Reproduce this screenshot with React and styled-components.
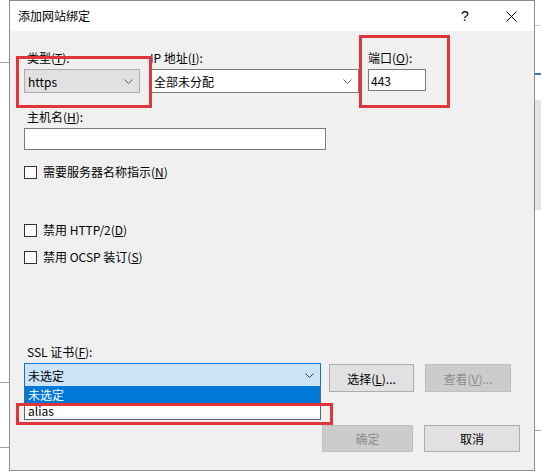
import styled, { createGlobalStyle } from 'styled-components';

const GlobalStyle = createGlobalStyle`
  html, body {
    margin: 0;
    padding: 0;
    background: #ffffff;
  }
  * {
    box-sizing: border-box;
  }
`;

const Screen = styled.div`
  width: 541px;
  height: 473px;
  overflow: hidden;
  padding-left: 9px;
  font-family: "Noto Sans CJK SC", "Noto Sans", sans-serif;
  font-size: 12px;
  color: #000;
  background-color: #ffffff;
  /* bits of the window behind the dialog */
  background-image:
    linear-gradient(#a0a0a0, #a0a0a0),
    linear-gradient(#a0a0a0, #a0a0a0),
    linear-gradient(#a0a0a0, #a0a0a0),
    linear-gradient(#d0d0d0, #d0d0d0),
    linear-gradient(#2f7fa8, #2f7fa8),
    linear-gradient(#e4e4e4, #e4e4e4),
    linear-gradient(#a0a0a0, #a0a0a0);
  background-size: 9px 1px, 9px 1px, 9px 1px, 8px 1px, 8px 2px, 8px 110px, 8px 1px;
  background-position: 0 62px, 0 382px, 0 447px, 533px 25px, 533px 73px, 533px 100px, 533px 430px;
  background-repeat: no-repeat;
`;

const Dialog = styled.div`
  position: relative;
  width: 526px;
  height: 471px;
  border: 1px solid #8c8c8c;
  display: flex;
  flex-direction: column;
  background: #f0f0f0;
`;

const TitleBar = styled.div`
  height: 30px;
  flex: none;
  background: #ffffff;
  display: flex;
  align-items: center;
  padding-left: 8px;
`;

const Title = styled.div`
  flex: 1;
  line-height: 16px;
  margin-top: -1px;
`;

const TitleButton = styled.div`
  width: 46px;
  height: 30px;
  display: flex;
  align-items: center;
  justify-content: center;
  font-size: 14px;
  font-family: "Liberation Sans", sans-serif;
`;

const Body = styled.div`
  flex: 1;
  display: flex;
  flex-direction: column;
  padding: 19px 14px 0 14px;
`;

const Row = styled.div`
  display: flex;
  align-items: flex-start;
  gap: ${p => p.$gap || 0}px;
  margin-top: ${p => p.$top || 0}px;
  margin-left: ${p => p.$left || 0}px;
  justify-content: ${p => (p.$end ? 'flex-end' : 'flex-start')};
`;

const Field = styled.div`
  display: flex;
  flex-direction: column;
  width: ${p => p.$width}px;
  margin-left: ${p => p.$left || 0}px;
  margin-top: ${p => p.$top || 0}px;
`;

const Label = styled.div`
  height: 16px;
  line-height: 16px;
  margin-bottom: 3px;
  padding-left: ${p => p.$indent || 0}px;
  white-space: nowrap;
`;

const Combo = styled.div`
  height: 24px;
  display: flex;
  align-items: center;
  justify-content: space-between;
  padding: 0 6px 0 3px;
  background: ${p => p.$bg || '#ffffff'};
  border: 1px solid ${p => p.$border || '#7a7a7a'};
  white-space: nowrap;
`;

const TextBox = styled.div`
  height: 22px;
  display: flex;
  align-items: center;
  padding: 0 2px;
  background: #ffffff;
  border: 1px solid #7a7a7a;
`;

const CheckRow = styled.div`
  display: flex;
  align-items: center;
  gap: 6px;
  height: 16px;
  margin-top: ${p => p.$top}px;
`;

const Box = styled.span`
  width: 13px;
  height: 13px;
  border: 1px solid #333333;
  background: #ffffff;
  flex: none;
`;

const CheckText = styled.span`
  white-space: nowrap;
  line-height: 16px;
`;

const Button = styled.div`
  width: ${p => p.$width}px;
  height: ${p => p.$height || 27}px;
  margin-top: ${p => p.$top || 0}px;
  display: flex;
  align-items: center;
  justify-content: center;
  background: ${p => (p.$disabled ? '#cccccc' : '#e1e1e1')};
  border: 1px solid ${p => (p.$disabled ? '#bfbfbf' : '#adadad')};
  color: ${p => (p.$disabled ? '#8c8c8c' : '#000000')};
  white-space: nowrap;
  flex: none;
`;

const DropList = styled.div`
  position: absolute;
  left: 14px;
  top: 386px;
  width: 297px;
  border: 1px solid #646464;
  border-top: none;
  background: #ffffff;
`;

const Option = styled.div`
  height: 16px;
  line-height: 16px;
  padding-left: 3px;
  background: ${p => (p.$active ? '#0078d7' : '#ffffff')};
  color: ${p => (p.$active ? '#ffffff' : '#000000')};
`;

const Mark = styled.div`
  position: absolute;
  left: ${p => p.$x}px;
  top: ${p => p.$y}px;
  width: ${p => p.$w}px;
  height: ${p => p.$h}px;
  border: 3px solid #e0363b;
  pointer-events: none;
`;

const Chevron = ({ color = '#606060' }) => (
  <svg width="9" height="5" viewBox="0 0 9 5">
    <polyline points="0.5,0.5 4.5,4.5 8.5,0.5" fill="none" stroke={color} strokeWidth="1" />
  </svg>
);

const CloseIcon = () => (
  <svg width="11" height="11" viewBox="0 0 11 11">
    <line x1="0.5" y1="0.5" x2="10.5" y2="10.5" stroke="#000" strokeWidth="1" />
    <line x1="10.5" y1="0.5" x2="0.5" y2="10.5" stroke="#000" strokeWidth="1" />
  </svg>
);

export default function App() {
  return (
    <Screen>
      <GlobalStyle />
      <Dialog>
        <TitleBar>
          <Title>添加网站绑定</Title>
          <TitleButton>?</TitleButton>
          <TitleButton><CloseIcon /></TitleButton>
        </TitleBar>

        <Body>
          <Row>
            <Field $width={116}>
              <Label $indent={3}>类型(<u>T</u>):</Label>
              <Combo $bg="#e1e1e1" $border="#adadad">
                https <Chevron />
              </Combo>
            </Field>
            <Field $width={209} $left={10}>
              <Label>IP 地址(<u>I</u>):</Label>
              <Combo>
                全部未分配 <Chevron />
              </Combo>
            </Field>
            <Field $width={58} $left={9}>
              <Label>端口(<u>O</u>):</Label>
              <TextBox>443</TextBox>
            </Field>
          </Row>

          <Field $width={302} $top={16}>
            <Label $indent={3}>主机名(<u>H</u>):</Label>
            <TextBox />
          </Field>

          <CheckRow $top={14}>
            <Box />
            <CheckText>需要服务器名称指示(<u>N</u>)</CheckText>
          </CheckRow>
          <CheckRow $top={42}>
            <Box />
            <CheckText>禁用 HTTP/2(<u>D</u>)</CheckText>
          </CheckRow>
          <CheckRow $top={11}>
            <Box />
            <CheckText>禁用 OCSP 装订(<u>S</u>)</CheckText>
          </CheckRow>

          <Field $width={297} $top={79}>
            <Label $indent={3}>SSL 证书(<u>F</u>):</Label>
          </Field>
          <Row>
            <Field $width={297}>
              <Combo $bg="#cce4f7" $border="#0078d7">
                未选定 <Chevron color="#3c3c3c" />
              </Combo>
            </Field>
            <Row $gap={11} $left={8}>
              <Button $width={85} $height={28} $top={1}>选择(<u>L</u>)...</Button>
              <Button $width={86} $height={28} $top={1} $disabled>查看(<u>V</u>)...</Button>
            </Row>
          </Row>

          <Row $end $gap={11} $top={33}>
            <Button $width={91} $disabled>确定</Button>
            <Button $width={96}>取消</Button>
          </Row>
        </Body>

        <DropList>
          <Option $active>未选定</Option>
          <Option>alias</Option>
        </DropList>

        <Mark $x={6} $y={55} $w={136} $h={52} />
        <Mark $x={349} $y={34} $w={91} $h={73} />
        <Mark $x={6} $y={402} $w={317} $h={22} />
      </Dialog>
    </Screen>
  );
}
